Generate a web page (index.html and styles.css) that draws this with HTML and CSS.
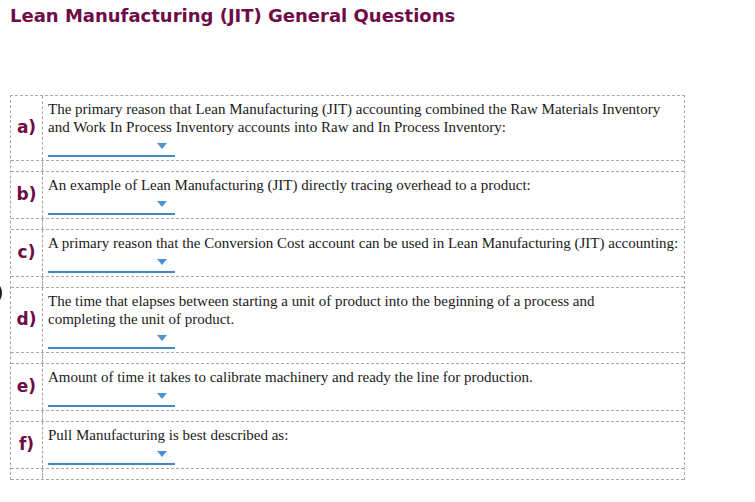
FILE: index.html
```html
<!DOCTYPE html>
<html>
<head>
<meta charset="utf-8">
<link rel="stylesheet" href="styles.css">
</head>
<body>
<span class="edge-mark"></span>
<h1 class="title">Lean Manufacturing (JIT) General Questions</h1>
<div class="qbox">
  <div class="row">
    <div class="label">a)</div>
    <div class="body">
      <div class="qtext">The primary reason that Lean Manufacturing (JIT) accounting combined the Raw Materials Inventory<br>and Work In Process Inventory accounts into Raw and In Process Inventory:</div>
      <div class="select"><span class="caret"></span></div>
    </div>
  </div>
  <div class="spacer"><div class="label"></div><div class="body"></div></div>
  <div class="row">
    <div class="label">b)</div>
    <div class="body">
      <div class="qtext">An example of Lean Manufacturing (JIT) directly tracing overhead to a product:</div>
      <div class="select"><span class="caret"></span></div>
    </div>
  </div>
  <div class="spacer"><div class="label"></div><div class="body"></div></div>
  <div class="row">
    <div class="label">c)</div>
    <div class="body">
      <div class="qtext">A primary reason that the Conversion Cost account can be used in Lean Manufacturing (JIT) accounting:</div>
      <div class="select"><span class="caret"></span></div>
    </div>
  </div>
  <div class="spacer"><div class="label"></div><div class="body"></div></div>
  <div class="row">
    <div class="label">d)</div>
    <div class="body">
      <div class="qtext">The time that elapses between starting a unit of product into the beginning of a process and<br>completing the unit of product.</div>
      <div class="select"><span class="caret"></span></div>
    </div>
  </div>
  <div class="spacer"><div class="label"></div><div class="body"></div></div>
  <div class="row">
    <div class="label">e)</div>
    <div class="body">
      <div class="qtext">Amount of time it takes to calibrate machinery and ready the line for production.</div>
      <div class="select"><span class="caret"></span></div>
    </div>
  </div>
  <div class="spacer"><div class="label"></div><div class="body"></div></div>
  <div class="row">
    <div class="label">f)</div>
    <div class="body">
      <div class="qtext">Pull Manufacturing is best described as:</div>
      <div class="select"><span class="caret"></span></div>
    </div>
  </div>
  <div class="spacer"><div class="label"></div><div class="body"></div></div>
</div>
</body>
</html>
```

FILE: styles.css
```css
html, body {
  margin: 0;
  padding: 0;
  background: #ffffff;
}
body {
  position: relative;
  padding: 0 0 0 10px;
  width: 745px;
  height: 502px;
  overflow: hidden;
}
.title {
  margin: 0;
  padding-top: 5px;
  font-family: "DejaVu Sans", Verdana, sans-serif;
  font-weight: bold;
  font-size: 18px;
  line-height: 22px;
  color: #6d0c46;
}
.qbox {
  margin-top: 68px;
  width: 673px;
  border: 1px dashed #a8a8a8;
  border-bottom: none;
}
.row, .spacer {
  display: flex;
  border-bottom: 1px dashed #a8a8a8;
}
.spacer {
  height: 10px;
}
.label {
  width: 32px;
  flex: none;
  border-right: 1px dashed #a8a8a8;
  display: flex;
  align-items: center;
  justify-content: center;
  font-family: "DejaVu Sans", Verdana, sans-serif;
  font-weight: bold;
  font-size: 17px;
  color: #6d0c46;
  padding-bottom: 2px;
  box-sizing: border-box;
}
.body {
  flex: 1;
  padding: 4px 0 3px 5px;
}
.spacer .body {
  padding: 0;
}
.qtext {
  font-family: "Liberation Serif", "Times New Roman", serif;
  font-size: 15px;
  line-height: 18px;
  color: #1a1a1a;
  white-space: nowrap;
}
.select {
  position: relative;
  width: 127px;
  height: 19px;
  border-bottom: 2px solid #4189c7;
}
.caret {
  position: absolute;
  right: 8px;
  top: 7px;
  width: 0;
  height: 0;
  border-left: 5.5px solid transparent;
  border-right: 5.5px solid transparent;
  border-top: 6px solid #4a92d0;
}
.edge-mark {
  position: absolute;
  left: -7px;
  top: 285px;
  width: 6px;
  height: 16px;
  border-radius: 50%;
  border-right: 3px solid #222;
}
```
